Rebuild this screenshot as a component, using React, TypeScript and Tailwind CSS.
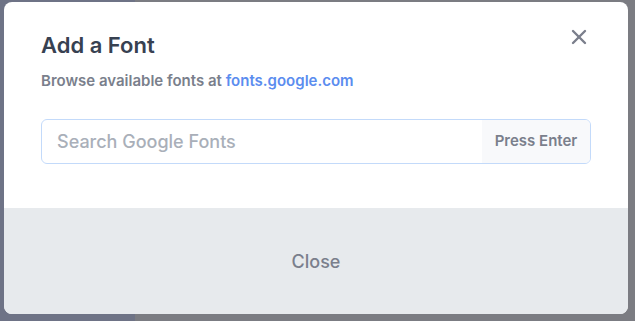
import { X } from "lucide-react";

export default function App() {
    return (
        <div className="relative w-[635px] h-[321px] overflow-hidden" style={{ fontFamily: "Inter, 'Noto Sans', sans-serif" }}>
            {/* Backdrop */}
            <div className="flex h-full w-full">
                <div className="w-[135px] h-full bg-[#6e7386]" />
                <div className="flex-1 h-full bg-[#7b7c82]" />
            </div>

            {/* Modal */}
            <div className="absolute left-[4px] top-[2px] w-[624px] h-[312px] bg-white rounded-lg overflow-hidden flex flex-col">
                <div className="relative h-[206px] px-[37px] pt-[29px]">
                    <button className="absolute right-[37px] top-[23px] text-[#7b7f8c]">
                        <X className="w-6 h-6" strokeWidth={2.4} />
                    </button>
                    <h3 className="text-[22px] leading-[28px] font-semibold text-[#374151]">Add a Font</h3>
                    <p className="mt-[12px] text-[15px] leading-[20px] font-semibold text-[#7a7f8c]">
                        Browse available fonts at <span className="text-[#5b8def]">fonts.google.com</span>
                    </p>
                    <div className="mt-[28px] flex h-[45px] w-[550px] rounded-md border border-[#c3dafa] overflow-hidden">
                        <div className="flex-1 flex items-center pl-[15px] text-[18px] font-medium text-[#a9afb9]">Search Google Fonts</div>
                        <div className="w-[108px] flex items-center justify-center bg-[#f8f9fb] text-[15px] font-semibold text-[#7a7f8c]">Press Enter</div>
                    </div>
                </div>
                <div className="flex-1 bg-[#e7eaed] flex items-center justify-center">
                    <span className="text-[18px] font-medium text-[#7a7f8c]">Close</span>
                </div>
            </div>
        </div>
    );
}
